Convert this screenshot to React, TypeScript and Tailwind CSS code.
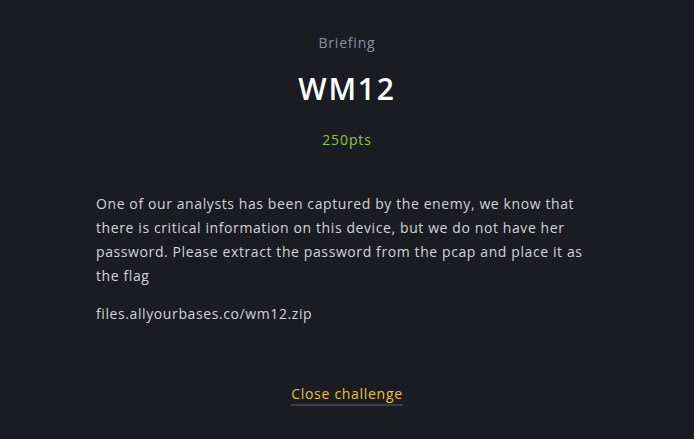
export default function App() {
  return (
    <div
      className="w-[694px] h-[439px] bg-[#1b1c21] flex flex-col items-center text-[#d2d3d8]"
      style={{ fontFamily: '"Open Sans", "Noto Sans", sans-serif' }}
    >
      <p className="mt-[34px] text-[14px] leading-[18px] tracking-[0.8px] text-[#8b90a3]">Briefing</p>
      <h1 className="mt-[20px] text-[30px] leading-[34px] font-semibold tracking-[1.8px] text-white">WM12</h1>
      <p className="mt-[25px] text-[14px] leading-[18px] tracking-[0.9px] text-[#8cc63f]">250pts</p>
      <div className="mt-[43px] w-[502px] text-[14px] leading-[24px] tracking-[0.6px]">
        <p>
          One of our analysts has been captured by the enemy, we know that there is critical information on this
          device, but we do not have her password. Please extract the password from the pcap and place it as the flag
        </p>
        <p className="mt-[14px]">files.allyourbases.co/wm12.zip</p>
      </div>
      <button className="mt-[59px] text-[14px] leading-[18px] tracking-[0.7px] text-[#e8c233] border-b-2 border-[#3d3f4c] pb-[1px]">
        Close challenge
      </button>
    </div>
  );
}
